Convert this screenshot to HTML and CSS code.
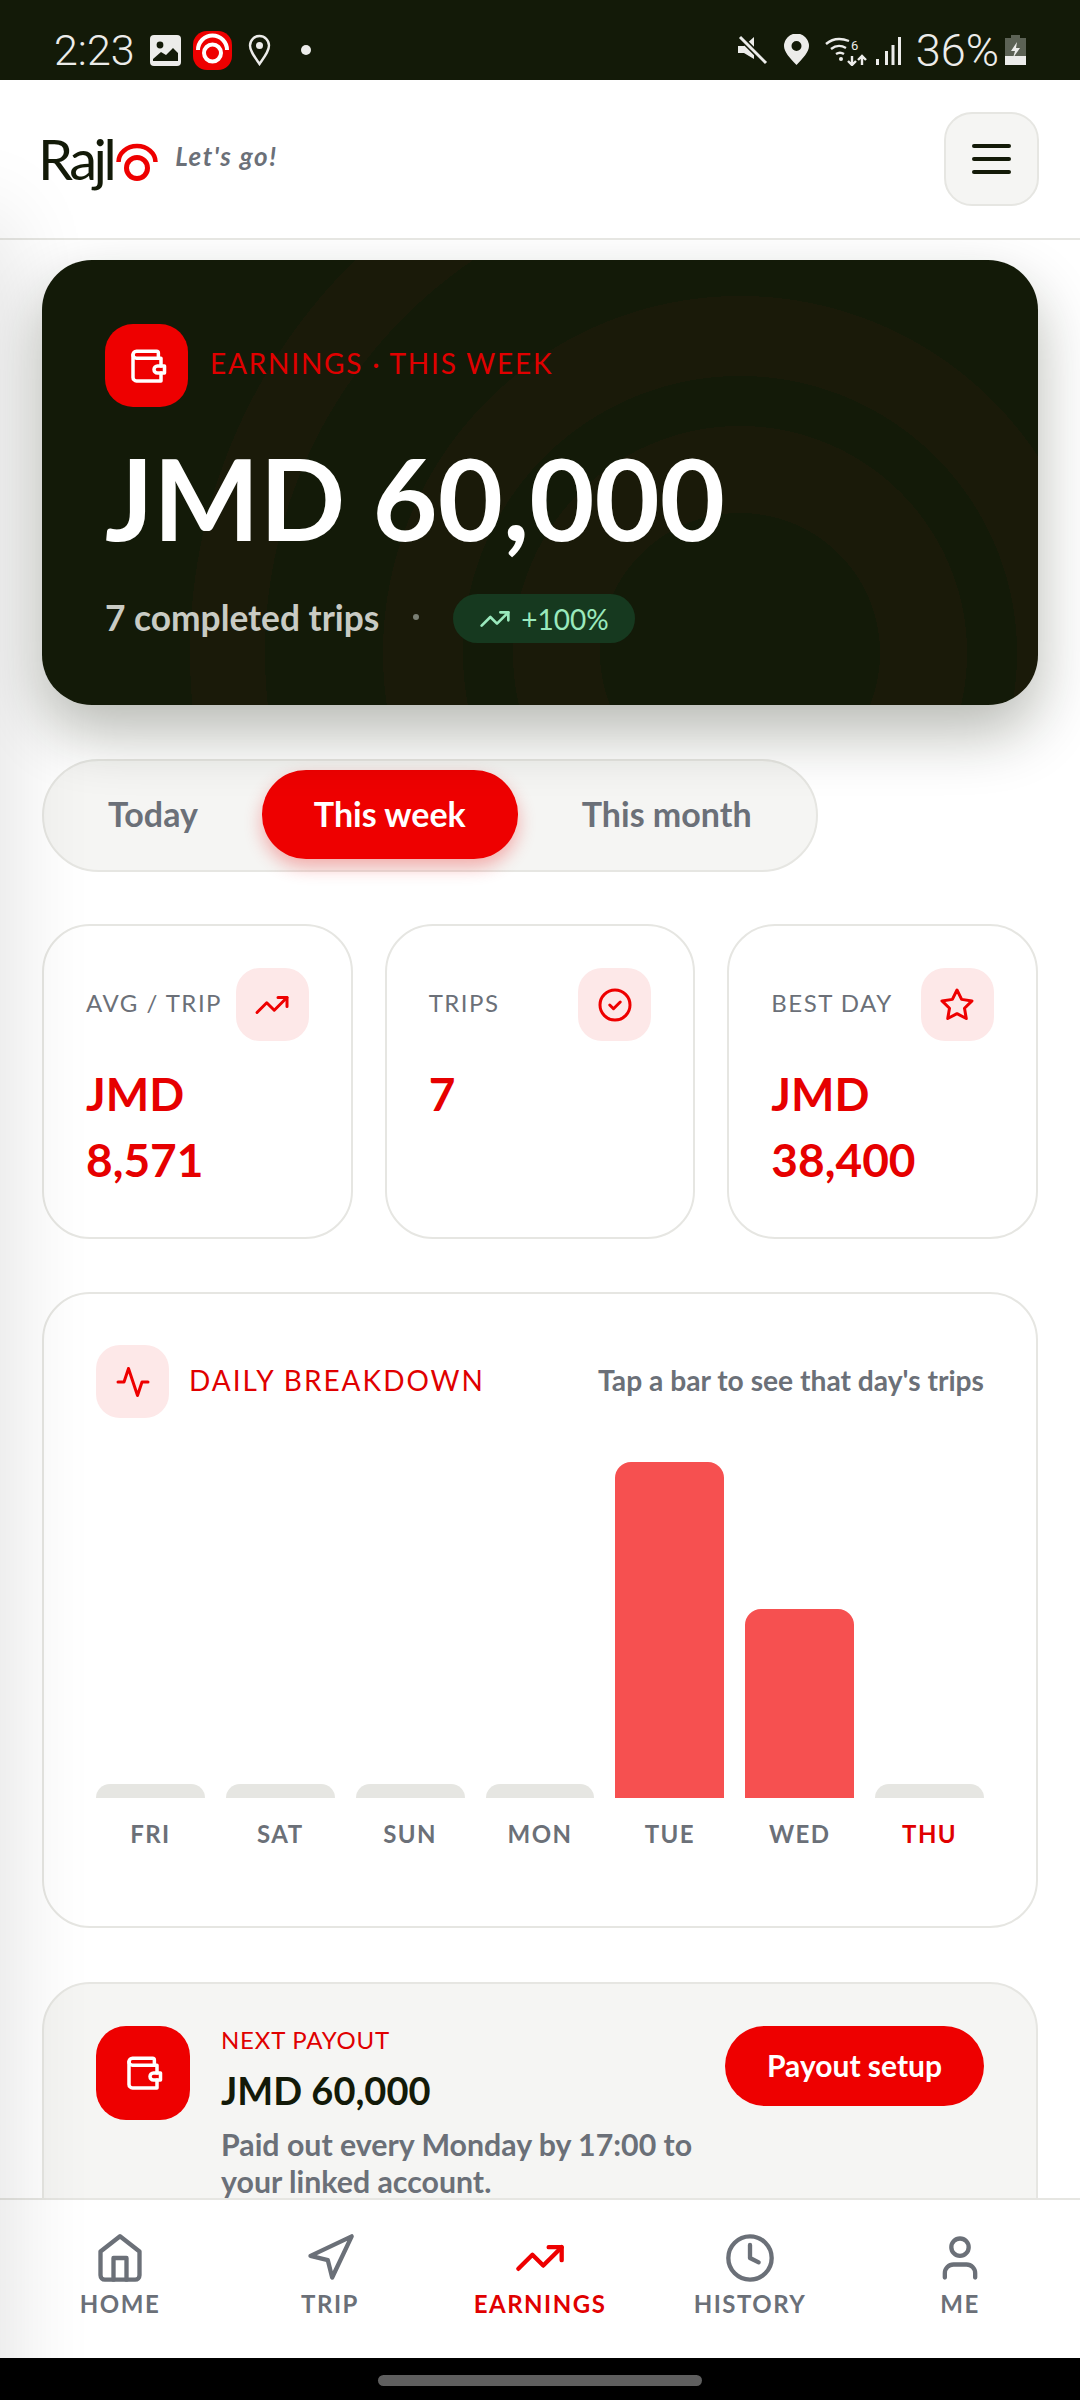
FILE: index.html
```html
<!doctype html>
<html>
  <head>
    <meta charset="utf-8">
    <title>Rajlo - Earnings</title>
    <link rel="stylesheet" href="styles.css">
  </head>
  <body>
    <div id="screen">

      <div id="statusbar">
        <div class="status-group">
          <span class="clock">2:23</span>
          <svg class="st-gallery" viewBox="0 0 31 31"><rect width="31" height="31" rx="4" fill="#ececea"/><circle cx="10" cy="10" r="3.4" fill="#131a08"/><path d="M3 24l8-7 5 3 7-7 5 5v8H3z" fill="#131a08"/></svg>
          <svg class="st-app" viewBox="0 0 39 39"><rect width="39" height="39" rx="14" fill="#ee0000"/><path d="M5 19a14.500 14.500 0 0 1 29 0" fill="none" stroke="#fff" stroke-width="4"/><circle cx="19.500" cy="22" r="8.500" fill="#ee0000" stroke="#fff" stroke-width="4"/></svg>
          <svg class="st-pin" viewBox="0 0 23 32"><path d="M11.500 30C6 22 2 17 2 11.500a9.500 9.500 0 0 1 19 0C21 17 17 22 11.500 30z" fill="none" stroke="#ececea" stroke-width="2.400"/><circle cx="11.500" cy="11.500" r="3.500" fill="#ececea"/></svg>
          <span class="st-dot"></span>
        </div>
        <div class="status-group">
          <svg class="st-mute" viewBox="0 0 30 30"><path d="M0 11h6l10-9v22L6 18H0z" fill="#ececea"/><path d="M2 2l26 26" stroke="#131a08" stroke-width="6"/><path d="M2 2l26 26" stroke="#ececea" stroke-width="3"/></svg>
          <svg class="st-loc" viewBox="0 0 25 32"><path fill-rule="evenodd" d="M12.500 31C6 24 0 18 0 12a12.500 12.500 0 0 1 25 0c0 6-6 12-12.500 19zm0-14a5 5 0 1 0 0-10 5 5 0 0 0 0 10z" fill="#ececea"/></svg>
          <svg class="st-wifi" viewBox="0 0 42 31"><g fill="none" stroke="#ececea" stroke-width="2.400"><path d="M1 9c7-6 15-6 23-3M6 14c5-4 10-4 15-1M11 19c3-2 5-2 8 0"/><path d="M27 21v8M23 26l4 4 4-4M37 30v-8M33 25l4-4 4 4"/></g><circle cx="16" cy="24" r="2" fill="#ececea"/><text x="26" y="15" class="st-six">6</text></svg>
          <svg class="st-signal" viewBox="0 0 27 29"><path d="M1 23h3v6H1zM10 15h3v14h-3zM23 1h3v28h-3zM16.500 9h3v20h-3z" fill="#ececea"/></svg>
          <span class="battery-text">36%</span>
          <svg class="st-batt" viewBox="0 0 21 30"><path d="M6 0h9v3h6v27H0V3h6z" fill="#5c6255"/><path d="M0 21h21v9H0z" fill="#ececea"/><path d="M12 7l-6 9h4l-2 7 7-10h-4z" fill="#ececea"/></svg>
        </div>
      </div>

      <div id="header">
        <div class="brand">
          <span class="brand-name">Rajl</span>
          <svg class="brand-mark" viewBox="0 0 42 38"><path d="M2.500 19a18.500 16 0 0 1 37 0" fill="none" stroke="#ee0000" stroke-width="4.500"/><circle cx="21" cy="25" r="10.500" fill="none" stroke="#ee0000" stroke-width="5"/></svg>
          <span class="brand-tag">Let's go!</span>
        </div>
        <div class="menu-btn">
          <span></span><span></span><span></span>
        </div>
      </div>

      <div id="main">

        <div class="hero">
          <div class="hero-top">
            <div class="tile tile-hero">
              <svg class="ico ico-wallet" viewBox="0 0 24 24"><path d="M20 12V7.500H6a2 2 0 0 1-2-2c0-1 .9-2 2-2h11.500a1 1 0 0 1 1 1v3"/><path d="M4 5.500V18.500a2 2 0 0 0 2 2h14V16"/><path d="M18 12a2 2 0 0 0 0 4h4v-4z"/></svg>
            </div>
            <div class="hero-label">EARNINGS · THIS WEEK</div>
          </div>
          <div class="hero-amount">JMD 60,000</div>
          <div class="hero-sub">
            <span>7 completed trips</span>
            <span class="hero-dot"></span>
            <span class="pill-up">
              <svg class="ico ico-pill" viewBox="0 0 24 24"><polyline points="22 7 13.500 15.500 8.500 10.500 2 17"/><polyline points="16 7 22 7 22 13"/></svg>
              +100%
            </span>
          </div>
        </div>

        <div class="tabs">
          <div class="tab">Today</div>
          <div class="tab active">This week</div>
          <div class="tab">This month</div>
        </div>

        <div class="stats">
          <div class="stat">
            <div class="stat-head">
              <span class="stat-label">AVG / TRIP</span>
              <div class="tile tile-soft"><svg class="ico" viewBox="0 0 24 24"><polyline points="22 7 13.500 15.500 8.500 10.500 2 17"/><polyline points="16 7 22 7 22 13"/></svg></div>
            </div>
            <div class="stat-value">JMD<br>8,571</div>
          </div>
          <div class="stat">
            <div class="stat-head">
              <span class="stat-label">TRIPS</span>
              <div class="tile tile-soft"><svg class="ico" viewBox="0 0 24 24"><circle cx="12" cy="12" r="10"/><path d="M8.500 12l2.500 2.500 4.500-4.500"/></svg></div>
            </div>
            <div class="stat-value">7</div>
          </div>
          <div class="stat">
            <div class="stat-head">
              <span class="stat-label">BEST DAY</span>
              <div class="tile tile-soft"><svg class="ico" viewBox="0 0 24 24"><polygon points="12 2 15.090 8.260 22 9.270 17 14.140 18.180 21.020 12 17.770 5.820 21.020 7 14.140 2 9.270 8.910 8.260 12 2"/></svg></div>
            </div>
            <div class="stat-value">JMD<br>38,400</div>
          </div>
        </div>

        <div class="chart">
          <div class="chart-head">
            <div class="tile tile-soft"><svg class="ico" viewBox="0 0 24 24"><polyline points="22 12 18 12 15 21 9 3 6 12 2 12"/></svg></div>
            <div class="chart-title">DAILY BREAKDOWN</div>
            <div class="chart-hint">Tap a bar to see that day's trips</div>
          </div>
          <div class="bars">
            <div class="bar empty"></div>
            <div class="bar empty"></div>
            <div class="bar empty"></div>
            <div class="bar empty"></div>
            <div class="bar filled" style="height: 336px"></div>
            <div class="bar filled" style="height: 189px"></div>
            <div class="bar empty"></div>
          </div>
          <div class="days">
            <span>FRI</span>
            <span>SAT</span>
            <span>SUN</span>
            <span>MON</span>
            <span>TUE</span>
            <span>WED</span>
            <span class="today">THU</span>
          </div>
        </div>

        <div class="payout">
          <div class="tile tile-payout">
            <svg class="ico ico-wallet" viewBox="0 0 24 24"><path d="M20 12V7.500H6a2 2 0 0 1-2-2c0-1 .9-2 2-2h11.500a1 1 0 0 1 1 1v3"/><path d="M4 5.500V18.500a2 2 0 0 0 2 2h14V16"/><path d="M18 12a2 2 0 0 0 0 4h4v-4z"/></svg>
          </div>
          <div class="payout-text">
            <div class="payout-label">NEXT PAYOUT</div>
            <div class="payout-amount">JMD 60,000</div>
            <div class="payout-note">Paid out every Monday by 17:00 to your linked account.</div>
          </div>
          <div class="payout-btn">Payout setup</div>
        </div>

      </div>

      <div id="nav">
        <div class="nav-item">
          <svg class="ico ico-nav" viewBox="0 0 24 24"><path d="M3 9l9-7 9 7v11a2 2 0 0 1-2 2H5a2 2 0 0 1-2-2z"/><polyline points="9 22 9 12 15 12 15 22"/></svg>
          <span>HOME</span>
        </div>
        <div class="nav-item">
          <svg class="ico ico-nav" viewBox="0 0 24 24"><polygon points="3 11 22 2 13 21 11 13 3 11"/></svg>
          <span>TRIP</span>
        </div>
        <div class="nav-item current">
          <svg class="ico ico-nav" viewBox="0 0 24 24"><polyline points="22 7 13.500 15.500 8.500 10.500 2 17"/><polyline points="16 7 22 7 22 13"/></svg>
          <span>EARNINGS</span>
        </div>
        <div class="nav-item">
          <svg class="ico ico-nav" viewBox="0 0 24 24"><circle cx="12" cy="12" r="10"/><polyline points="12 6 12 12 16 14"/></svg>
          <span>HISTORY</span>
        </div>
        <div class="nav-item">
          <svg class="ico ico-nav" viewBox="0 0 24 24"><path d="M19 21v-2a4 4 0 0 0-4-4H9a4 4 0 0 0-4 4v2"/><circle cx="12" cy="7" r="4"/></svg>
          <span>ME</span>
        </div>
      </div>

      <div id="sysbar"><div class="handle"></div></div>

      <div id="edge"><div class="edge-shadow"></div></div>
    </div>
  </body>
</html>
```

FILE: styles.css
```css
* {
  box-sizing: border-box;
}

body {
  margin: 0;
  font-family: 'Lato', 'Noto Sans', sans-serif;
  color: #131a08;
  background: #fff;
}

#screen {
  position: relative;
  width: 1080px;
  height: 2400px;
  display: flex;
  flex-direction: column;
  overflow: hidden;
}

/* status bar */

#statusbar {
  height: 80px;
  flex: none;
  background: #131a08;
  color: #ececea;
  display: flex;
  justify-content: space-between;
  align-items: center;
  padding: 20px 54px 0 54px;
  font-family: 'Roboto', sans-serif;
}

.status-group {
  display: flex;
  align-items: center;
}

.clock {
  font-size: 43px;
  font-weight: 300;
  width: 96px;
}

.st-gallery { width: 31px; height: 31px; }
.st-app { width: 39px; height: 39px; margin-left: 12px; }
.st-pin { width: 23px; height: 32px; margin-left: 16px; }
.st-dot { width: 10px; height: 10px; border-radius: 50%; background: #ececea; margin-left: 30px; }

.st-mute { width: 30px; height: 30px; }
.st-loc { width: 25px; height: 32px; margin-left: 16px; }
.st-wifi { width: 42px; height: 31px; margin-left: 16px; }
.st-signal { width: 27px; height: 29px; margin-left: 8px; }
.st-batt { width: 21px; height: 30px; margin-left: 6px; }
.st-six { font-size: 13px; fill: #ececea; font-family: 'Roboto', sans-serif; }

.battery-text {
  font-size: 45px;
  font-weight: 300;
  margin-left: 14px;
}

/* header */

#header {
  height: 160px;
  flex: none;
  background: #fff;
  border-bottom: 2px solid #e6e6e2;
  display: flex;
  justify-content: space-between;
  align-items: center;
  padding: 0 41px 0 38px;
}

.brand {
  display: flex;
  align-items: center;
}

.brand-name {
  font-size: 56px;
  font-weight: 400;
  letter-spacing: -3.5px;
  line-height: 60px;
  color: #131a08;
}

.brand-mark {
  width: 42px;
  height: 38px;
  margin: 6px 0 0 3px;
}

.brand-tag {
  font-size: 26px;
  font-weight: 700;
  font-style: italic;
  letter-spacing: 1.6px;
  color: #6b7078;
  margin: 0 0 6px 17px;
}

.menu-btn {
  width: 95px;
  height: 94px;
  border: 2px solid #e6e6e2;
  border-radius: 28px;
  background: #f5f5f3;
  display: flex;
  flex-direction: column;
  justify-content: center;
  align-items: center;
  gap: 9px;
}

.menu-btn span {
  width: 39px;
  height: 4px;
  border-radius: 2px;
  background: #131a08;
}

/* shared */

.ico {
  width: 36px;
  height: 36px;
  fill: none;
  stroke: #ee0000;
  stroke-width: 2;
  stroke-linecap: round;
  stroke-linejoin: round;
}

.tile {
  flex: none;
  display: flex;
  align-items: center;
  justify-content: center;
}

.tile-soft {
  width: 73px;
  height: 73px;
  border-radius: 24px;
  background: #fde8e8;
}

.tile-hero {
  width: 83px;
  height: 83px;
  border-radius: 28px;
  background: #ee0000;
}

.tile-payout {
  width: 94px;
  height: 94px;
  border-radius: 30px;
  background: #ee0000;
}

.ico-wallet {
  width: 42px;
  height: 42px;
  stroke: #fff;
}

/* main column */

#main {
  flex: 1;
  min-height: 0;
  overflow: hidden;
  padding: 20px 42px 0;
}

.hero {
  position: relative;
  z-index: 1;
  height: 445px;
  padding: 64px 63px 0;
  border-radius: 50px;
  background-color: #131a08;
  background-image: radial-gradient(circle at 698px 393px,
    transparent 140px, #1a1a09 140px, #1a1a09 227px,
    transparent 227px, transparent 277px, #1a1a09 277px, #1a1a09 357px,
    transparent 357px, transparent 475px, #1a1a09 475px, #1a1a09 550px,
    transparent 550px);
  box-shadow: 0 28px 60px rgba(19, 26, 8, 0.3);
}

.hero-top {
  display: flex;
  align-items: center;
  gap: 22px;
}

.hero-label {
  font-size: 28px;
  letter-spacing: 1.8px;
  color: #e00000;
  padding-bottom: 5px;
}

.hero-amount {
  font-size: 112.500px;
  font-weight: 700;
  line-height: 120px;
  color: #fff;
  margin-top: 31px;
}

.hero-sub {
  display: flex;
  align-items: center;
  font-size: 35.300px;
  font-weight: 700;
  color: #c9cbc4;
  margin-top: 33px;
}

.hero-dot {
  width: 6px;
  height: 6px;
  border-radius: 50%;
  background: #7a7f74;
  margin: 0 34px;
}

.pill-up {
  display: flex;
  align-items: center;
  gap: 10px;
  height: 49px;
  margin-top: 3px;
  padding: 0 26px;
  border-radius: 25px;
  background: #16391f;
  font-size: 28px;
  font-weight: 400;
  color: #9ae9bd;
}

.ico-pill {
  width: 32px;
  height: 32px;
  stroke: #9ae9bd;
}

/* period tabs */

.tabs {
  display: inline-flex;
  gap: 12px;
  margin-top: 54px;
  height: 113px;
  padding: 9px 12px 11px;
  border: 2px solid #e6e6e2;
  border-radius: 57px;
  background: #f5f5f3;
  vertical-align: top;
}

.tab {
  display: flex;
  align-items: center;
  padding: 0 52px 2px;
  border-radius: 44px;
  font-size: 34px;
  font-weight: 700;
  color: #6b7078;
}

.tab.active {
  background: #ee0000;
  color: #fff;
  box-shadow: 0 8px 18px rgba(238, 0, 0, 0.3);
}

/* stat cards */

.stats {
  display: grid;
  grid-template-columns: repeat(3, 1fr);
  gap: 32px;
  margin-top: 52px;
}

.stat {
  height: 315px;
  padding: 42px 42px 0;
  border: 2px solid #e6e6e2;
  border-radius: 48px;
  background: #fff;
}

.stat-head {
  display: flex;
  justify-content: space-between;
  align-items: center;
}

.stat-label {
  font-size: 24px;
  font-weight: 400;
  letter-spacing: 1.5px;
  color: #6b7078;
  white-space: nowrap;
  padding-bottom: 5px;
}

.stat-value {
  font-size: 46px;
  font-weight: 700;
  line-height: 66px;
  color: #e60000;
  margin-top: 20px;
}

/* daily chart */

.chart {
  height: 636px;
  margin-top: 53px;
  padding: 51px 52px 0;
  border: 2px solid #e6e6e2;
  border-radius: 48px;
  background: #fff;
}

.chart-head {
  display: flex;
  align-items: center;
}

.chart-title {
  font-size: 28px;
  letter-spacing: 2px;
  color: #e00000;
  margin: 0 0 3px 20px;
}

.chart-hint {
  font-size: 28.200px;
  font-weight: 700;
  color: #6b7078;
  margin: 0 0 3px auto;
}

.bars {
  display: grid;
  grid-template-columns: repeat(7, 1fr);
  gap: 21px;
  align-items: end;
  height: 336px;
  margin-top: 44px;
}

.bar {
  border-radius: 16px 16px 0 0;
}

.bar.empty {
  height: 14px;
  background: #e6e6e2;
}

.bar.filled {
  background: #f65050;
}

.days {
  display: grid;
  grid-template-columns: repeat(7, 1fr);
  gap: 21px;
  margin-top: 21px;
  font-size: 24px;
  font-weight: 700;
  letter-spacing: 1.4px;
  line-height: 30px;
  text-align: center;
  color: #6b7078;
}

.days .today {
  color: #e00000;
}

/* payout */

.payout {
  display: flex;
  align-items: flex-start;
  margin-top: 54px;
  height: 400px;
  padding: 42px 52px 0;
  border: 2px solid #e6e6e2;
  border-radius: 48px;
  background: #f5f5f3;
}

.payout-text {
  flex: 1;
  margin: -1px 24px 0 31px;
}

.payout-label {
  font-size: 24px;
  line-height: 30px;
  letter-spacing: 0.8px;
  color: #e00000;
}

.payout-amount {
  font-size: 38px;
  font-weight: 700;
  line-height: 50px;
  margin-top: 10px;
  color: #131a08;
}

.payout-note {
  font-size: 30.300px;
  font-weight: 700;
  line-height: 37px;
  color: #6b7078;
  margin-top: 11px;
}

.payout-btn {
  flex: none;
  width: 259px;
  height: 80px;
  display: flex;
  align-items: center;
  justify-content: center;
  padding-bottom: 3px;
  border-radius: 40px;
  background: #ee0000;
  color: #fff;
  font-size: 30px;
  font-weight: 700;
}

/* bottom nav */

#nav {
  height: 160px;
  flex: none;
  display: grid;
  grid-template-columns: repeat(5, 1fr);
  padding: 32px 15px 0;
  background: #fff;
  border-top: 2px solid #e6e6e2;
}

.nav-item {
  display: flex;
  flex-direction: column;
  align-items: center;
  gap: 5px;
  font-size: 24px;
  font-weight: 700;
  letter-spacing: 1.5px;
  line-height: 30px;
  color: #6b7078;
}

.ico-nav {
  width: 52px;
  height: 52px;
  stroke: #6b7078;
}

.nav-item.current {
  color: #e00000;
}

.nav-item.current .ico-nav {
  stroke: #ee0000;
}

/* system gesture bar */

#sysbar {
  height: 42px;
  flex: none;
  background: #000;
  display: flex;
  justify-content: center;
  padding-top: 17px;
}

.handle {
  width: 324px;
  height: 11px;
  border-radius: 6px;
  background: #5f5f5f;
}

/* soft shadow down the left edge of the page, lies over the content */

#edge {
  position: absolute;
  top: 80px;
  bottom: 42px;
  left: 0;
  width: 240px;
  overflow: hidden;
  pointer-events: none;
}

.edge-shadow {
  position: absolute;
  top: 140px;
  bottom: -100px;
  left: -60px;
  width: 60px;
  box-shadow: 0 0 90px rgba(0, 0, 0, 0.16);
}
```
